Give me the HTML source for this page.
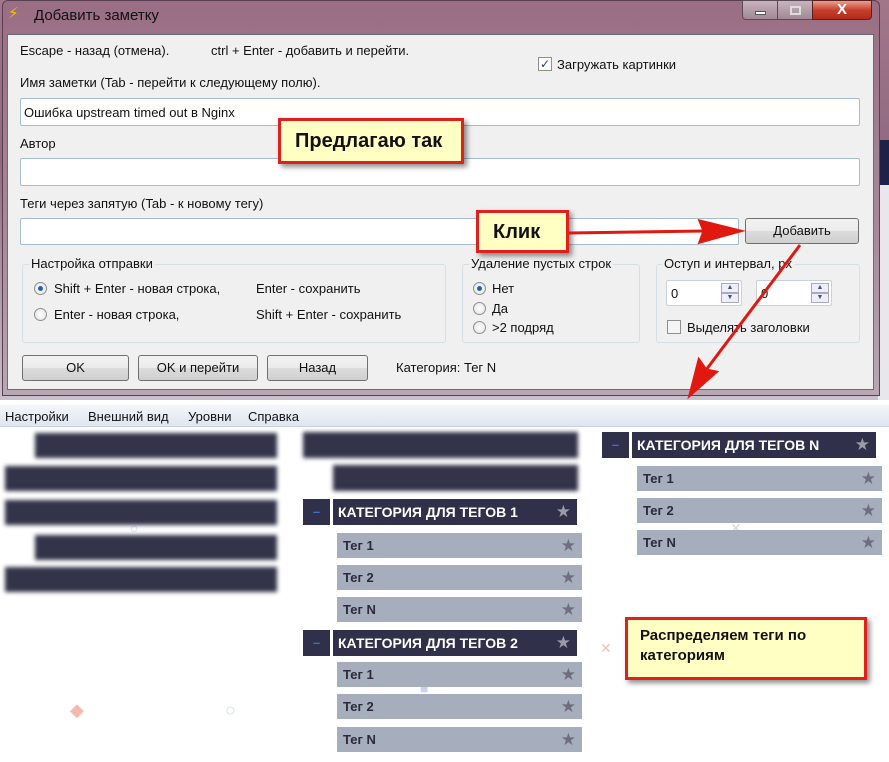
<!DOCTYPE html>
<html><head><meta charset="utf-8"><style>
*{margin:0;padding:0;box-sizing:border-box}
body{width:889px;height:762px;overflow:hidden;position:relative;background:#fff;font-family:"Liberation Sans","DejaVu Sans",sans-serif;font-size:13px;color:#111}
.a{position:absolute}
.inp{position:absolute;background:#fff;border:1px solid #a9bccf;border-radius:2px}
.btn{position:absolute;border:1px solid #707070;border-radius:3px;background:linear-gradient(#f2f2f2,#ebebeb 50%,#dcdcdc 51%,#cfcfcf);text-align:center;font-size:13px}
.grp{position:absolute;border:1px solid #d5dfe5;border-radius:3px}
.lbl{position:absolute;background:#f0f0f0;padding:0 2px;font-size:13px}
.rad{position:absolute;width:13px;height:13px;border-radius:50%;border:1px solid #8e8f8f;background:radial-gradient(#fff,#e0e0e0)}
.rad.on::after{content:"";position:absolute;left:3px;top:3px;width:5px;height:5px;border-radius:50%;background:#2a5fb0}
.call{position:absolute;background:#ffffc4;border:3px solid #e0201c;box-shadow:3px 3px 5px rgba(0,0,0,.45);font-weight:bold;color:#111}
.cat{position:absolute;background:#30304a;color:#fff;font-weight:bold;font-size:14px;line-height:26px;padding-left:5px}
.mn{position:absolute;background:#30304a;color:#3a6fd8;font-weight:bold;text-align:center;line-height:26px;width:27px;height:26px}
.tag{position:absolute;background:#a6aebe;color:#2a2a3a;font-weight:bold;font-size:13px;line-height:25px;padding-left:6px;width:245px;height:25px}
.st{position:absolute;right:6px;top:1px;color:#6e6e7e;font-size:17px;line-height:24px}
.cat .st{color:#9a9aa8}
.bl{position:absolute;background:#33334a;filter:blur(2px);height:25px}
</style></head><body>
<div class="a" style="left:0;top:0;width:889px;height:400px;background:linear-gradient(#a27689,#8e6a80 40%,#c8c0cc)"></div>
<div class="a" style="left:878px;top:140px;width:11px;height:45px;background:#1e2248"></div>
<div class="a" style="left:878px;top:185px;width:11px;height:215px;background:#e8e8ec"></div>
<div class="a" style="left:2px;top:0;width:878px;height:396px;background:linear-gradient(#9a6e84,#a88a9a 60%,#b8a8b4);border-radius:6px 6px 0 0;border:1px solid #5a4050"></div>
<div class="a" style="left:8px;top:4px;color:#f2c200;font-size:15px">⚡</div>
<div class="a" style="left:34px;top:7px;font-size:15px;color:#111">Добавить заметку</div>
<div class="a" style="left:742px;top:0;width:36px;height:20px;border:1px solid #5a4a55;border-radius:0 0 0 4px;background:linear-gradient(#c8b4be,#a08894)"><div class="a" style="left:12px;top:10px;width:11px;height:4px;background:#fff;border:1px solid #555"></div></div>
<div class="a" style="left:777px;top:0;width:36px;height:20px;border:1px solid #5a4a55;background:linear-gradient(#c8b4be,#a08894)"><div class="a" style="left:12px;top:5px;width:11px;height:9px;border:2px solid #ddd"></div></div>
<div class="a" style="left:812px;top:0;width:60px;height:20px;border:1px solid #5a2020;border-radius:0 0 4px 0;background:linear-gradient(#e8a090,#c8402c 50%,#b02a18);color:#fff;font-weight:bold;text-align:center;font-size:15px;line-height:18px">X</div>
<div class="a" style="left:7px;top:34px;width:867px;height:356px;background:#f0f0f0;border:1px solid #6a6a7a"></div>

<div class="a" style="left:20px;top:43px">Escape - назад (отмена).</div>
<div class="a" style="left:211px;top:43px">ctrl + Enter - добавить и перейти.</div>
<div class="a" style="left:538px;top:57px;width:14px;height:14px;border:1px solid #8e8f8f;background:#fff;color:#1c3e7a;font-size:12px;line-height:12px;text-align:center">✓</div>
<div class="a" style="left:557px;top:57px">Загружать картинки</div>
<div class="a" style="left:20px;top:75px">Имя заметки (Tab - перейти к следующему полю).</div>
<div class="inp" style="left:20px;top:98px;width:840px;height:28px"><span class="a" style="left:3px;top:6px">Ошибка upstream timed out в Nginx</span></div>
<div class="a" style="left:20px;top:136px">Автор</div>
<div class="inp" style="left:20px;top:158px;width:840px;height:28px"></div>
<div class="a" style="left:20px;top:196px">Теги через запятую (Tab - к новому тегу)</div>
<div class="inp" style="left:20px;top:218px;width:719px;height:27px"></div>
<div class="btn" style="left:745px;top:218px;width:114px;height:26px;line-height:24px">Добавить</div>

<div class="grp" style="left:22px;top:264px;width:424px;height:79px"></div>
<div class="lbl" style="left:29px;top:256px">Настройка отправки</div>
<div class="rad on" style="left:34px;top:282px"></div><div class="a" style="left:54px;top:281px">Shift + Enter - новая строка,</div>
<div class="a" style="left:256px;top:281px">Enter - сохранить</div>
<div class="rad" style="left:34px;top:308px"></div><div class="a" style="left:54px;top:307px">Enter - новая строка,</div>
<div class="a" style="left:256px;top:307px">Shift + Enter - сохранить</div>

<div class="grp" style="left:462px;top:264px;width:178px;height:79px"></div>
<div class="lbl" style="left:469px;top:256px">Удаление пустых строк</div>
<div class="rad on" style="left:473px;top:282px"></div><div class="a" style="left:492px;top:281px">Нет</div>
<div class="rad" style="left:473px;top:302px"></div><div class="a" style="left:492px;top:301px">Да</div>
<div class="rad" style="left:473px;top:321px"></div><div class="a" style="left:492px;top:320px">&gt;2 подряд</div>

<div class="grp" style="left:656px;top:264px;width:204px;height:79px"></div>
<div class="lbl" style="left:662px;top:256px">Оступ и интервал, px</div>
<div class="inp" style="left:666px;top:280px;width:76px;height:26px;border-color:#c8d0d8"><span class="a" style="left:4px;top:5px">0</span><div class="a" style="left:54px;top:2px;width:18px;height:10px;border:1px solid #aab;background:#eef;font-size:7px;text-align:center;color:#456">▲</div><div class="a" style="left:54px;top:12px;width:18px;height:10px;border:1px solid #aab;background:#eef;font-size:7px;text-align:center;color:#456">▼</div></div>
<div class="inp" style="left:756px;top:280px;width:76px;height:26px;border-color:#c8d0d8"><span class="a" style="left:4px;top:5px">0</span><div class="a" style="left:54px;top:2px;width:18px;height:10px;border:1px solid #aab;background:#eef;font-size:7px;text-align:center;color:#456">▲</div><div class="a" style="left:54px;top:12px;width:18px;height:10px;border:1px solid #aab;background:#eef;font-size:7px;text-align:center;color:#456">▼</div></div>
<div class="a" style="left:667px;top:320px;width:14px;height:14px;border:1px solid #8e8f8f;background:#f4f4f4"></div>
<div class="a" style="left:687px;top:320px">Выделять заголовки</div>

<div class="btn" style="left:22px;top:355px;width:107px;height:26px;line-height:24px">OK</div>
<div class="btn" style="left:138px;top:355px;width:120px;height:26px;line-height:24px">OK и перейти</div>
<div class="btn" style="left:267px;top:355px;width:101px;height:26px;line-height:24px">Назад</div>
<div class="a" style="left:396px;top:360px">Категория: Тег N</div>

<div class="call" style="left:278px;top:118px;width:186px;height:46px;font-size:20px;line-height:40px;padding-left:14px">Предлагаю так</div>
<div class="call" style="left:476px;top:210px;width:93px;height:43px;font-size:20px;line-height:38px;padding-left:14px">Клик</div>

<div class="a" style="left:0;top:400px;width:889px;height:362px;background:#fff"></div>
<div class="a" style="left:0;top:405px;width:889px;height:22px;background:linear-gradient(#f4f6fa,#dfe6f0);border-bottom:1px solid #c8d0dc"></div>
<div class="a" style="left:5px;top:409px;font-size:13px">Настройки</div>
<div class="a" style="left:88px;top:409px;font-size:13px">Внешний вид</div>
<div class="a" style="left:188px;top:409px;font-size:13px">Уровни</div>
<div class="a" style="left:248px;top:409px;font-size:13px">Справка</div>

<div class="a" style="left:70px;top:700px;color:#f4b8b0;font-size:18px">◆</div>
<div class="a" style="left:130px;top:520px;color:#cfd8e8;font-size:14px">○</div>
<div class="a" style="left:225px;top:700px;color:#cce0d0;font-size:18px">○</div>
<div class="a" style="left:420px;top:680px;color:#c8d4ee;font-size:14px">■</div>
<div class="a" style="left:600px;top:640px;color:#f4c0c0;font-size:14px">✕</div>
<div class="a" style="left:730px;top:520px;color:#d0d8e8;font-size:14px">✕</div>

<div class="bl" style="left:35px;top:433px;width:242px"></div>
<div class="bl" style="left:5px;top:466px;width:272px"></div>
<div class="bl" style="left:5px;top:500px;width:272px"></div>
<div class="bl" style="left:35px;top:535px;width:242px"></div>
<div class="bl" style="left:5px;top:567px;width:272px"></div>
<div class="bl" style="left:303px;top:432px;width:275px;height:26px"></div>
<div class="bl" style="left:333px;top:465px;width:245px;height:26px"></div>

<div class="mn" style="left:303px;top:499px">–</div>
<div class="cat" style="left:333px;top:499px;width:244px;height:26px">КАТЕГОРИЯ ДЛЯ ТЕГОВ 1<span class="st">★</span></div>
<div class="tag" style="left:337px;top:533px">Тег 1<span class="st">★</span></div>
<div class="tag" style="left:337px;top:565px">Тег 2<span class="st">★</span></div>
<div class="tag" style="left:337px;top:597px">Тег N<span class="st">★</span></div>
<div class="mn" style="left:303px;top:630px">–</div>
<div class="cat" style="left:333px;top:630px;width:244px;height:26px">КАТЕГОРИЯ ДЛЯ ТЕГОВ 2<span class="st">★</span></div>
<div class="tag" style="left:337px;top:662px">Тег 1<span class="st">★</span></div>
<div class="tag" style="left:337px;top:694px">Тег 2<span class="st">★</span></div>
<div class="tag" style="left:337px;top:727px">Тег N<span class="st">★</span></div>

<div class="mn" style="left:602px;top:432px">–</div>
<div class="cat" style="left:632px;top:432px;width:244px;height:26px">КАТЕГОРИЯ ДЛЯ ТЕГОВ N<span class="st">★</span></div>
<div class="tag" style="left:637px;top:466px">Тег 1<span class="st">★</span></div>
<div class="tag" style="left:637px;top:498px">Тег 2<span class="st">★</span></div>
<div class="tag" style="left:637px;top:530px">Тег N<span class="st">★</span></div>

<div class="call" style="left:625px;top:617px;width:242px;height:63px;font-size:15px;line-height:20px;padding:6px 0 0 12px">Распределяем теги по категориям</div>

<svg class="a" style="left:0;top:0" width="889" height="762">
<g stroke="#e01810" stroke-width="3" fill="#e01810">
<line x1="569" y1="233" x2="705" y2="231"/>
<polygon points="740,231 700,221 704,231 700,242"/>
<line x1="800" y1="245" x2="706" y2="370"/>
<polygon points="690,395 699,360 706,370 716,372"/>
</g></svg>
</body></html>
